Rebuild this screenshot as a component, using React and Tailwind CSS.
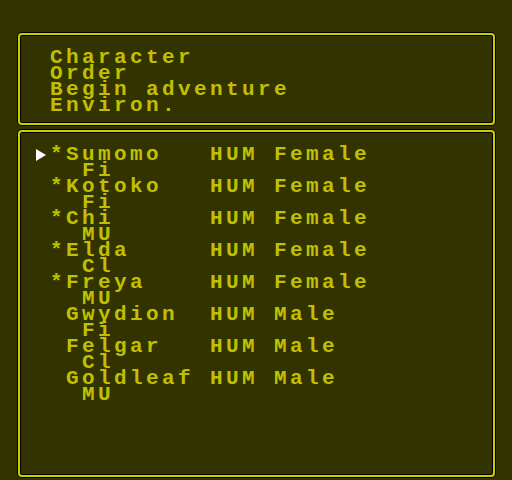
import React from "react";

const party = [
  { star: true, name: "Sumomo", race: "HUM", sex: "Female", cls: "Fi", sel: true },
  { star: true, name: "Kotoko", race: "HUM", sex: "Female", cls: "Fi" },
  { star: true, name: "Chi", race: "HUM", sex: "Female", cls: "MU" },
  { star: true, name: "Elda", race: "HUM", sex: "Female", cls: "Cl" },
  { star: true, name: "Freya", race: "HUM", sex: "Female", cls: "MU" },
  { star: false, name: "Gwydion", race: "HUM", sex: "Male", cls: "Fi" },
  { star: false, name: "Felgar", race: "HUM", sex: "Male", cls: "Cl" },
  { star: false, name: "Goldleaf", race: "HUM", sex: "Male", cls: "MU" },
];

const pad = (s, n) => s + " ".repeat(Math.max(0, n - s.length));

function Box({ className, children }) {
  return (
    <div
      className={
        "ml-[18px] w-[477px] rounded-[4px] border-2 border-[#cccc00] shadow-[0_0_0_1px_#000,inset_0_0_0_1px_#000] " +
        className
      }
    >
      {children}
    </div>
  );
}

export default function App() {
  return (
    <div
      className="w-[512px] h-[480px] bg-[#333300] text-[#c0c000] font-bold overflow-hidden pt-[33px]"
      style={{ fontFamily: '"Liberation Mono", monospace' }}
    >
      <Box className="h-[92px] pl-[30px] pt-[15px]">
        <div className="text-[21px] leading-[16px] tracking-[3.4px] whitespace-pre">
          <div>Character</div>
          <div>Order</div>
          <div>Begin adventure</div>
          <div>Environ.</div>
        </div>
      </Box>
      <Box className="mt-[5px] h-[347px] pl-[14px] pt-[15px]">
        <div className="text-[21px] leading-[16px] tracking-[3.4px] whitespace-pre">
          {party.map((p) => (
            <div key={p.name}>
              <div className="flex">
                <div className="w-[16px] h-[16px] flex items-center pl-[2px]">
                  {p.sel && (
                    <svg width="10" height="12" viewBox="0 0 10 12">
                      <path d="M0 0 L10 6 L0 12 Z" fill="#ffffff" />
                    </svg>
                  )}
                </div>
                <div>{(p.star ? "*" : " ") + pad(p.name, 9) + p.race + " " + p.sex}</div>
              </div>
              <div className="flex">
                <div className="w-[16px]" />
                <div>{"  " + p.cls}</div>
              </div>
            </div>
          ))}
        </div>
      </Box>
    </div>
  );
}
